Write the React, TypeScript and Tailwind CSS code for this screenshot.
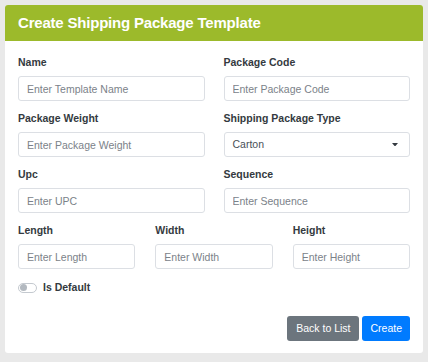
import React from "react";

const font = { fontFamily: '"Liberation Sans", Arial, sans-serif' };

type FieldProps = {
  label: string;
  placeholder: string;
};

const Field = ({ label, placeholder }: FieldProps) => (
  <div className="flex flex-col">
    <label className="mb-[6px] h-[15px] text-[10.5px] font-bold leading-[15px] text-[#343a40]">
      {label}
    </label>
    <input
      placeholder={placeholder}
      className="h-[25px] w-full rounded-[3px] border border-[#dcdfe4] bg-white px-[8px] text-[10.5px] text-[#495057] outline-none placeholder:text-[#7b8289]"
    />
  </div>
);

const SelectField = ({ label, value }: { label: string; value: string }) => (
  <div className="flex flex-col">
    <label className="mb-[6px] h-[15px] text-[10.5px] font-bold leading-[15px] text-[#343a40]">
      {label}
    </label>
    <div className="flex h-[25px] w-full items-center justify-between rounded-[3px] border border-[#dcdfe4] bg-white pl-[8px] pr-[11px] text-[10.5px] text-[#495057]">
      <span>{value}</span>
      <svg width="6" height="3.5" viewBox="0 0 6 3.5">
        <path d="M0 0h6L3 3.5z" fill="#343a40" />
      </svg>
    </div>
  </div>
);

export default function App() {
  return (
    <div className="min-h-screen bg-[#e9e9e9] pl-[5px] pt-[5px]" style={font}>
      <div className="w-[418px] overflow-hidden rounded-[3px] bg-white">
        <div className="flex h-[36px] items-center bg-[#9cba2b] px-[13px]">
          <h1 className="text-[15px] font-bold tracking-[-0.2px] text-white">
            Create Shipping Package Template
          </h1>
        </div>
        <div className="flex flex-col px-[13px] pb-[12px] pt-[14px]">
          <div className="flex flex-col gap-y-[10px]">
            <div className="grid grid-cols-2 gap-x-[19px]">
              <Field label="Name" placeholder="Enter Template Name" />
              <Field label="Package Code" placeholder="Enter Package Code" />
            </div>
            <div className="grid grid-cols-2 gap-x-[19px]">
              <Field label="Package Weight" placeholder="Enter Package Weight" />
              <SelectField label="Shipping Package Type" value="Carton" />
            </div>
            <div className="grid grid-cols-2 gap-x-[19px]">
              <Field label="Upc" placeholder="Enter UPC" />
              <Field label="Sequence" placeholder="Enter Sequence" />
            </div>
            <div className="grid grid-cols-3 gap-x-[20px]">
              <Field label="Length" placeholder="Enter Length" />
              <Field label="Width" placeholder="Enter Width" />
              <Field label="Height" placeholder="Enter Height" />
            </div>
          </div>
          <div className="mt-[11px] flex h-[15px] items-center gap-x-[6px]">
            <div className="flex h-[10px] w-[19px] items-center rounded-full border border-[#c4c9cf] bg-white px-[1px]">
              <div className="h-[7px] w-[7px] rounded-full bg-[#b3b9c0]" />
            </div>
            <span className="text-[10.5px] font-bold text-[#343a40]">Is Default</span>
          </div>
          <div className="mt-[21px] flex justify-end gap-x-[3px]">
            <button className="h-[25px] rounded-[3px] bg-[#6c757d] px-[9px] text-[10.5px] text-white">
              Back to List
            </button>
            <button className="h-[25px] rounded-[3px] bg-[#007bff] px-[8px] text-[10.5px] text-white">
              Create
            </button>
          </div>
        </div>
      </div>
    </div>
  );
}
